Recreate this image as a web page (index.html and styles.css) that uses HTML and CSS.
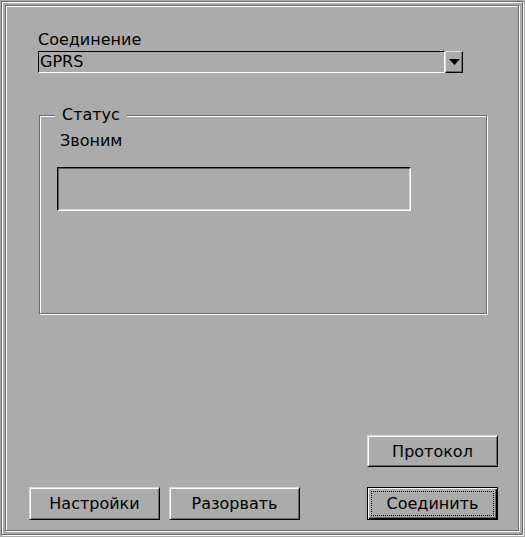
FILE: index.html
```html
<!DOCTYPE html>
<html lang="ru">
<head>
  <meta charset="UTF-8" />
  <meta name="viewport" content="width=device-width, initial-scale=1.0"/>
  <title>Соединение</title>
  <link rel="stylesheet" href="styles.css">
</head>
<body>
  <div class="frame">
    <div class="dialog">
      <div class="field-label">Соединение</div>
      <div class="combo">
        <div class="combo-value">GPRS</div>
        <div class="combo-arrow">
          <svg width="11" height="6" viewBox="0 0 11 6"><polygon points="0,0 11,0 5.5,6" fill="#000"/></svg>
        </div>
      </div>

      <div class="group">
        <div class="group-title">Статус</div>
        <div class="status-text">Звоним</div>
        <div class="status-box"></div>
      </div>

      <div class="spacer"></div>

      <div class="row row-right">
        <button class="btn">Протокол</button>
      </div>
      <div class="row row-bottom">
        <button class="btn">Настройки</button>
        <button class="btn">Разорвать</button>
        <button class="btn btn-default"><span class="focus">Соединить</span></button>
      </div>
    </div>
  </div>
</body>
</html>
```

FILE: styles.css
```css
* { box-sizing: border-box; }
html, body { margin: 0; height: 100%; }
body { background: #ababab; font-family: "DejaVu Sans", sans-serif; font-size: 16px; color: #000; overflow: hidden; }

.frame { margin: 1px; width: 522px; height: 534px; padding: 3px; border: 1px solid #6b6b6b; box-shadow: 1px 1px 0 #fff, inset 1px 1px 0 #fff; }
.dialog { height: 100%; display: flex; flex-direction: column; padding: 25px 20px 10px 0; border: 1px solid #6b6b6b; box-shadow: 1px 1px 0 #fff, inset 1px 1px 0 #fff; }

.field-label { margin-left: 32px; line-height: 18px; }
.combo { display: flex; height: 22px; margin: 2px 0 0 32px; }
.combo-value { width: 407px; padding-left: 1px; line-height: 20px; border: 1px solid; border-color: #000 #fff #fff #000; }
.combo-arrow { width: 18px; display: flex; align-items: center; justify-content: center; border: 1px solid; border-color: #e0e0e0 #000 #000 #e0e0e0; box-shadow: inset -1px -1px 0 #6b6b6b; }

.group { width: 448px; height: 199px; margin: 42px 0 0 33px; display: flex; flex-direction: column; align-items: flex-start; border: 1px solid #6b6b6b; box-shadow: 1px 1px 0 #fff, inset 1px 1px 0 #fff; }
.group-title { margin: -10px 0 0 15px; padding: 0 7px; background: #ababab; line-height: 18px; }
.status-text { margin: 8px 0 0 20px; line-height: 18px; }
.status-box { width: 354px; height: 44px; margin: 17px 0 0 17px; border: 1px solid; border-color: #000 #fff #fff #000; box-shadow: inset 1px 1px 0 #5e5e5e, inset -1px -1px 0 #dcdcdc; }

.spacer { flex: 1; }
.row { display: flex; }
.row-right { justify-content: flex-end; }
.row-bottom { margin-top: 20px; padding-left: 23px; gap: 9px; }

.btn { width: 131px; height: 32px; padding: 0; font: inherit; color: #000; background: #ababab; border: 1px solid; border-color: #d8d8d8 #000 #000 #d8d8d8; box-shadow: inset 1px 1px 0 #fff, inset -1px -1px 0 #6b6b6b; }
.row-bottom .btn { height: 33px; }
.btn-default { margin-left: auto; padding: 3px; border-color: #000; box-shadow: inset 1px 1px 0 #fff, inset -1px -1px 0 #000, inset -2px -2px 0 #6b6b6b; }
.focus { height: 100%; display: flex; align-items: center; justify-content: center; border: 1px dotted #000; }
```
